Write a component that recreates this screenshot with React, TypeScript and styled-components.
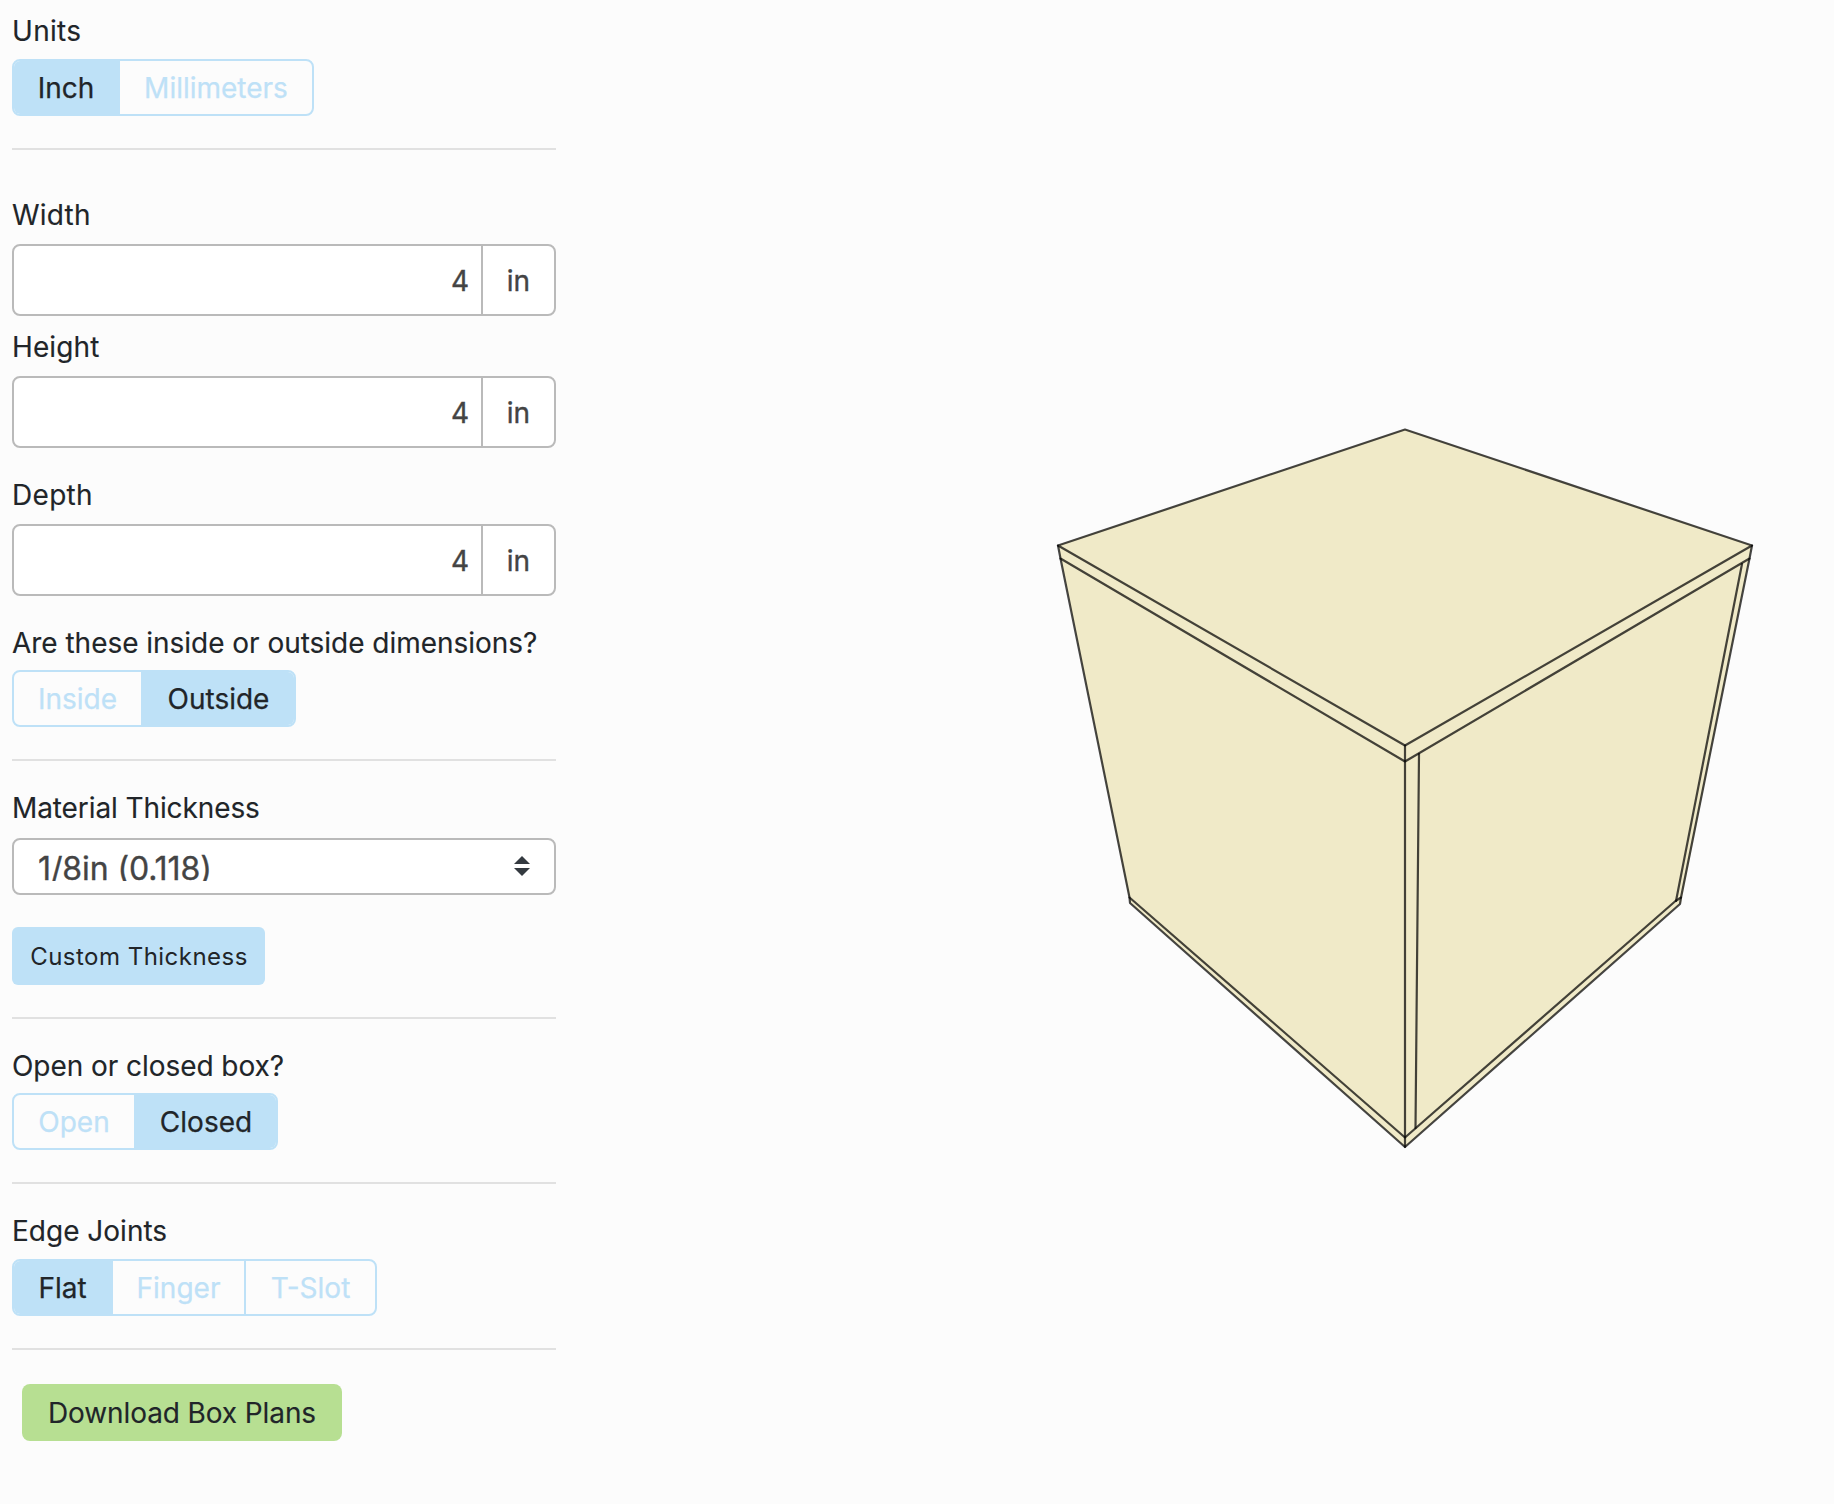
import React, { useState } from 'react';
import styled, { createGlobalStyle } from 'styled-components';

const SKY = '#bee1f7';
const INK = '#212529';

const GlobalStyle = createGlobalStyle`
  *, *::before, *::after { box-sizing: border-box; }
  body {
    margin: 0;
    background: #fcfcfc;
    color: ${INK};
    font-family: Inter, "Liberation Sans", sans-serif;
    font-size: 28px;
    line-height: 42px;
    -webkit-text-stroke: 0.12px currentColor;
  }
`;

const Page = styled.main`
  display: grid;
  grid-template-columns: 556px 858px;
  justify-content: space-between;
  height: 1504px;
  overflow: hidden;
`;

const Controls = styled.form`
  display: flex;
  flex-direction: column;
  align-items: flex-start;
  padding: 10px 0 0 12px;
`;

const Label = styled.label<{ $above?: number; $below?: number; $track?: number }>`
  height: 42px;
  margin-top: ${(p) => p.$above ?? 26}px;
  margin-bottom: ${(p) => p.$below ?? 6}px;
  white-space: nowrap;
  letter-spacing: ${(p) => p.$track ?? 0}px;
`;

const Group = styled.div`
  display: flex;
  height: 57px;
  border: 2px solid ${SKY};
  border-radius: 8px;
  overflow: hidden;
`;

const Option = styled.button<{ $active: boolean; $width: number }>`
  width: ${(p) => p.$width}px;
  padding: 0;
  border: 0;
  background: ${(p) => (p.$active ? SKY : 'transparent')};
  color: ${(p) => (p.$active ? INK : SKY)};
  font: inherit;
  -webkit-text-stroke: 0.25px currentColor;
  & + & { border-left: 2px solid ${SKY}; }
`;

const Divider = styled.hr`
  width: 100%;
  height: 2px;
  margin: 32px 0 0;
  border: 0;
  background: #e1e1e1;
`;

const InputGroup = styled.div`
  display: flex;
  width: 100%;
  height: 72px;
  border: 2px solid #bababa;
  border-radius: 8px;
  background: #fff;
  overflow: hidden;
  color: #444;
  -webkit-text-stroke: 0.35px currentColor;
`;

const NumberField = styled.input`
  flex: 1;
  min-width: 0;
  padding: 2px 12px 0;
  border: 0;
  outline: 0;
  background: transparent;
  color: inherit;
  font: inherit;
  text-align: right;
`;

const Unit = styled.span`
  display: flex;
  align-items: center;
  justify-content: center;
  width: 73px;
  padding-top: 2px;
  border-left: 2px solid #bababa;
`;

const Select = styled.div`
  display: flex;
  align-items: flex-start;
  justify-content: space-between;
  width: 100%;
  height: 57px;
  padding: 0 24px;
  border: 2px solid #bababa;
  border-radius: 8px;
  background: #fff;
  color: #444;
  font-size: 32px;
  -webkit-text-stroke: 0.35px currentColor;
`;

const SelectValue = styled.span`
  height: 30px;
  margin-top: 11px;
  line-height: 35px;
  letter-spacing: -0.1px;
  overflow: hidden;
  white-space: nowrap;
`;

const SortArrows = styled.svg`
  margin-top: 16px;
  fill: #343a40;
`;

const CustomButton = styled.button`
  width: 253px;
  height: 58px;
  margin-top: 32px;
  padding: 1px 0 0 1px;
  border: 0;
  border-radius: 6px;
  background: ${SKY};
  color: ${INK};
  font: inherit;
  font-size: 24px;
  letter-spacing: 0.48px;
  -webkit-text-stroke: 0;
`;

const DownloadButton = styled.button`
  width: 320px;
  height: 57px;
  margin: 34px 0 0 10px;
  padding: 0;
  border: 0;
  border-radius: 8px;
  background: #b7df92;
  color: ${INK};
  font: inherit;
  letter-spacing: -0.1px;
`;

const Preview = styled.section`
  display: flex;
`;

function Dimension({ label, above, track }: { label: string; above: number; track: number }) {
  return (
    <>
      <Label $above={above} $below={8} $track={track}>{label}</Label>
      <InputGroup>
        <NumberField defaultValue="4" aria-label={label} />
        <Unit>in</Unit>
      </InputGroup>
    </>
  );
}

type Choice = { text: string; width: number };

function Toggle({ choices, initial }: { choices: Choice[]; initial: number }) {
  const [active, setActive] = useState(initial);
  return (
    <Group>
      {choices.map((c, i) => (
        <Option key={c.text} type="button" $active={i === active} $width={c.width} onClick={() => setActive(i)}>
          {c.text}
        </Option>
      ))}
    </Group>
  );
}

function BoxDrawing() {
  return (
    <svg width="858" height="1504" viewBox="976 0 858 1504" aria-label="Box preview">
      <path fill="#f0eac8" d="M1405 429L1752 545L1681 903L1405 1147L1130 903L1058 545Z" />
      <g fill="none" stroke="#000" strokeOpacity="0.72" strokeWidth="2.2" strokeLinejoin="round" strokeLinecap="round">
        <path d="M1058 545.500L1405 429.500L1752 545.500L1405 745.500Z" />
        <path d="M1058 545.500L1060.500 558.500L1405 761.500L1749.500 558.500L1752 545.500" />
        <path d="M1060.500 558.500L1129.500 897.500L1405 1137.500L1675.500 901L1681 897.500L1749.500 558.500" />
        <path d="M1129.500 897.500L1130 903L1405 1147L1680 904L1681 897.500" />
        <path d="M1405 745.500V1147M1419 754L1415.500 1128M1742 564L1676 901" />
      </g>
    </svg>
  );
}

export default function App() {
  return (
    <>
      <GlobalStyle />
      <Page>
        <Controls>
          <Label $above={0} $below={7} $track={0.3}>Units</Label>
          <Toggle initial={0} choices={[{ text: 'Inch', width: 104 }, { text: 'Millimeters', width: 194 }]} />
          <Divider />
          <Dimension label="Width" above={44} track={0.2} />
          <Dimension label="Height" above={10} track={0.1} />
          <Dimension label="Depth" above={26} track={0.3} />
          <Label $track={-0.03}>Are these inside or outside dimensions?</Label>
          <Toggle initial={1} choices={[{ text: 'Inside', width: 127 }, { text: 'Outside', width: 153 }]} />
          <Divider />
          <Label $below={9} $track={-0.1}>Material Thickness</Label>
          <Select>
            <SelectValue>1/8in (0.118)</SelectValue>
            <SortArrows width="16" height="20" viewBox="0 0 16 20">
              <path d="M0 8L8 0L16 8ZM0 12H16L8 20Z" />
            </SortArrows>
          </Select>
          <CustomButton type="button">Custom Thickness</CustomButton>
          <Divider />
          <Label $track={-0.06}>Open or closed box?</Label>
          <Toggle initial={1} choices={[{ text: 'Open', width: 120 }, { text: 'Closed', width: 142 }]} />
          <Divider />
          <Label $below={7}>Edge Joints</Label>
          <Toggle initial={0} choices={[{ text: 'Flat', width: 97 }, { text: 'Finger', width: 133 }, { text: 'T-Slot', width: 131 }]} />
          <Divider />
          <DownloadButton type="button">Download Box Plans</DownloadButton>
        </Controls>
        <Preview><BoxDrawing /></Preview>
      </Page>
    </>
  );
}
